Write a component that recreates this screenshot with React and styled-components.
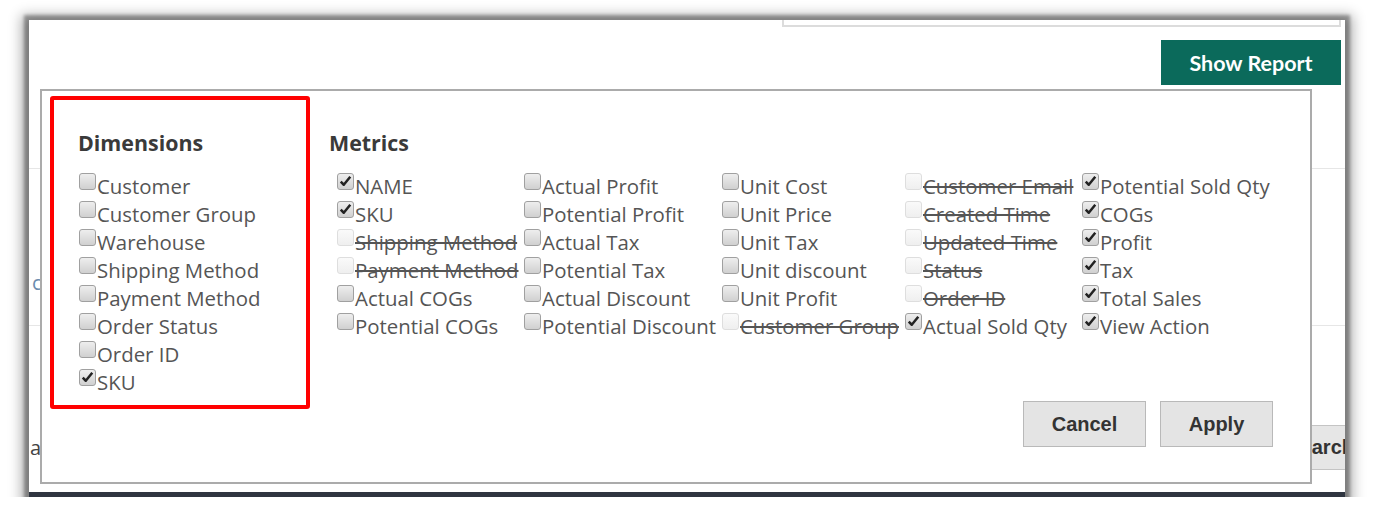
import React from "react";
import styled, { createGlobalStyle } from "styled-components";

const Global = createGlobalStyle`
  html, body { margin: 0; padding: 0; background: #ffffff; }
  body { font-family: "Open Sans", "Liberation Sans", sans-serif; }
  * { box-sizing: border-box; }
`;

const Window = styled.div`
  position: relative;
  margin: 20px 0 0 29px;
  width: 1316px;
  height: 477px;
  background: #ffffff;
  box-shadow: 0 0 3px 5px rgba(0, 0, 0, 0.32), 0 3px 12px 8px rgba(0, 0, 0, 0.3);
  overflow: hidden;
  display: flex;
  flex-direction: column;
`;

const InputStub = styled.div`
  align-self: flex-end;
  margin-right: 4px;
  width: 559px;
  height: 7px;
  border: 2px solid #dcdcdc;
  border-top: 0;
`;

const ReportRow = styled.div`
  display: flex;
  justify-content: flex-end;
  padding-right: 4px;
  margin-top: 13px;
`;

const ShowReport = styled.button`
  width: 180px;
  height: 45px;
  border: 0;
  background: #0b6a5b;
  color: #ffffff;
  font-family: Lato, "Liberation Sans", sans-serif;
  font-weight: 700;
  font-size: 21.5px;
  padding: 0;
`;

const PageRow = styled.div`
  height: ${(p) => p.$h}px;
  border-bottom: ${(p) => (p.$line ? "1px solid #e6e6e6" : "0")};
  display: flex;
  align-items: flex-start;
  padding-top: ${(p) => p.$pt || 0}px;
`;

const LowerRow = styled.div`
  width: 100%;
  display: flex;
  align-items: center;
  justify-content: space-between;
`;

const BgText = styled.span`
  font-size: 20px;
  line-height: 28px;
  padding-left: ${(p) => p.$pl || 0}px;
  color: ${(p) => p.$color};
`;

const SearchButton = styled.button`
  height: 45px;
  margin-right: -30px;
  padding: 0 20px;
  background: #e6e6e6;
  border: 1px solid #c4c4c4;
  font-family: "Liberation Sans", Arial, sans-serif;
  font-weight: 700;
  font-size: 20px;
  color: #333;
`;

const BottomBar = styled.div`
  height: 5px;
  background: #2f3540;
`;

const Modal = styled.div`
  position: absolute;
  left: 11px;
  top: 69px;
  width: 1272px;
  height: 395px;
  border: 2px solid #ababab;
  background: #ffffff;
  display: flex;
  align-items: flex-start;
  padding: 5px 0 0 8px;
`;

const DimBox = styled.div`
  width: 260px;
  height: 313px;
  border: 4px solid #ff0000;
  border-radius: 3px;
  padding: 29px 0 0 24px;
`;

const Heading = styled.div`
  font-family: "Open Sans", sans-serif;
  font-weight: 700;
  font-size: 21.4px;
  line-height: 28px;
  color: #3a3a3a;
  margin-bottom: 15px;
`;

const DimList = styled.div`
  display: flex;
  flex-direction: column;
  margin-left: 1px;
`;

const MetricsSection = styled.div`
  align-self: stretch;
  flex: 1;
  margin-left: 19px;
  padding-top: 33px;
  display: flex;
  flex-direction: column;
`;

const MetricsGrid = styled.div`
  display: grid;
  grid-template-columns: 187px 198px 183px 177px auto;
  grid-auto-flow: column;
  grid-template-rows: repeat(6, 28px);
  margin-left: 8px;
`;

const Item = styled.label`
  display: flex;
  align-items: flex-start;
  white-space: nowrap;
  font-size: 20.4px;
  line-height: 28px;
  color: #555555;
  text-decoration: ${(p) => (p.$disabled ? "line-through" : "none")};
`;

const Box = styled.span`
  flex: none;
  width: 17px;
  height: 17px;
  margin: 1px 1px 0 0;
  border-radius: 3px;
  border: 1px solid ${(p) => (p.$disabled ? "#dedede" : "#a0a0a0")};
  background: ${(p) =>
    p.$disabled
      ? "linear-gradient(#fafafa, #efefef)"
      : "linear-gradient(#eeeeee, #d0d0d0)"};
  display: flex;
  align-items: center;
  justify-content: center;
`;

const Footer = styled.div`
  margin-top: auto;
  align-self: flex-end;
  display: flex;
  gap: 14px;
  margin-right: 37px;
  margin-bottom: 35px;
`;

const ModalButton = styled.button`
  width: ${(p) => p.$w}px;
  height: 46px;
  background: #e4e4e4;
  border: 1px solid #b9b9b9;
  font-family: "Liberation Sans", Arial, sans-serif;
  font-weight: 700;
  font-size: 20px;
  color: #333333;
  padding: 0;
`;

const Check = () => (
  <svg width="13" height="13" viewBox="0 0 12 12">
    <path d="M1.6 6.2 L4.4 9 L10.4 1.6" fill="none" stroke="#222" strokeWidth="2.3" strokeLinejoin="round" />
  </svg>
);

const Option = ({ label, checked, disabled }) => (
  <Item $disabled={disabled}>
    <Box $disabled={disabled}>{checked && <Check />}</Box>
    {label}
  </Item>
);

const dimensions = [
  ["Customer"],
  ["Customer Group"],
  ["Warehouse"],
  ["Shipping Method"],
  ["Payment Method"],
  ["Order Status"],
  ["Order ID"],
  ["SKU", true],
];

const metrics = [
  ["NAME", true], ["SKU", true], ["Shipping Method", false, true], ["Payment Method", false, true], ["Actual COGs"], ["Potential COGs"],
  ["Actual Profit"], ["Potential Profit"], ["Actual Tax"], ["Potential Tax"], ["Actual Discount"], ["Potential Discount"],
  ["Unit Cost"], ["Unit Price"], ["Unit Tax"], ["Unit discount"], ["Unit Profit"], ["Customer Group", false, true],
  ["Customer Email", false, true], ["Created Time", false, true], ["Updated Time", false, true], ["Status", false, true], ["Order ID", false, true], ["Actual Sold Qty", true],
  ["Potential Sold Qty", true], ["COGs", true], ["Profit", true], ["Tax", true], ["Total Sales", true], ["View Action", true],
];

export default function App() {
  return (
    <>
      <Global />
      <Window>
        <InputStub />
        <ReportRow>
          <ShowReport>Show Report</ShowReport>
        </ReportRow>
        <PageRow $h={84} $line />
        <PageRow $h={157} $line $pt={100}>
          <BgText $pl={3} $color="#6b8cae">c</BgText>
        </PageRow>
        <PageRow $h={166} $pt={99}>
          <LowerRow>
            <BgText $pl={1} $color="#444">a</BgText>
            <SearchButton>Search</SearchButton>
          </LowerRow>
        </PageRow>
        <BottomBar />

        <Modal>
          <DimBox>
            <Heading>Dimensions</Heading>
            <DimList>
              {dimensions.map(([l, c]) => (
                <Option key={l} label={l} checked={c} />
              ))}
            </DimList>
          </DimBox>
          <MetricsSection>
            <Heading>Metrics</Heading>
            <MetricsGrid>
              {metrics.map(([l, c, d], i) => (
                <Option key={i} label={l} checked={c} disabled={d} />
              ))}
            </MetricsGrid>
            <Footer>
              <ModalButton $w={123}>Cancel</ModalButton>
              <ModalButton $w={113}>Apply</ModalButton>
            </Footer>
          </MetricsSection>
        </Modal>
      </Window>
    </>
  );
}
